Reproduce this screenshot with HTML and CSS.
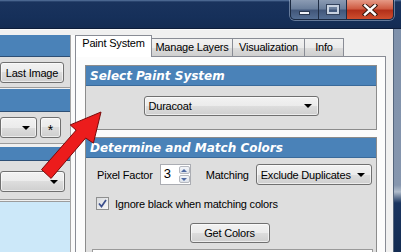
FILE: index.html
```html
<!DOCTYPE html>
<html>
<head>
<title>Paint System</title>
<link rel="stylesheet" href="styles.css">
</head>
<body>

<div class="window">
  <div class="titlebar">
    <div class="caption">
      <div class="cap-btn cap-min"><span class="min-glyph"></span></div>
      <div class="cap-btn cap-max"><span class="max-glyph"></span></div>
      <div class="cap-btn cap-close">
        <svg width="16" height="12" viewBox="0 0 16 12">
          <path d="M3 1.5 L13 10.5 M13 1.5 L3 10.5" stroke="#3a1a10" stroke-width="4.4" stroke-linecap="square"/>
          <path d="M3 1.5 L13 10.5 M13 1.5 L3 10.5" stroke="#fff" stroke-width="2.4" stroke-linecap="square"/>
        </svg>
      </div>
    </div>
  </div>

  <div class="main">
    <div class="client">

      <div class="sidebar">
        <div class="side-sec s1">
          <div class="side-head"></div>
          <div class="side-body">
            <button class="btn last-btn">Last Image</button>
          </div>
        </div>
        <div class="side-sec s2">
          <div class="side-head"></div>
          <div class="side-body">
            <div class="combo combo-short"><span class="caret"></span></div>
            <button class="btn star-btn">*</button>
          </div>
        </div>
        <div class="side-sec s3">
          <div class="side-head"></div>
          <div class="side-body">
            <div class="combo combo-wide"><span class="caret"></span></div>
          </div>
        </div>
        <div class="side-view"></div>
      </div>

      <div class="splitter"></div>

      <div class="tabctl">
        <div class="tabstrip">
          <div class="tab selected tab-paint">Paint System</div>
          <div class="tab tab-layers">Manage Layers</div>
          <div class="tab tab-vis">Visualization</div>
          <div class="tab tab-info">Info</div>
        </div>
        <div class="tabpage">

          <div class="group">
            <div class="group-head">Select Paint System</div>
            <div class="group-body paint-body">
              <div class="combo combo-paint">Duracoat<span class="caret"></span></div>
            </div>
          </div>

          <div class="group group-match">
            <div class="group-head">Determine and Match Colors</div>
            <div class="group-body match-body">
              <div class="row row-top">
                <span class="lbl">Pixel Factor</span>
                <div class="spin">
                  <span class="spin-val">3</span>
                  <div class="spin-btns">
                    <span class="spin-up"></span>
                    <span class="spin-down"></span>
                  </div>
                </div>
                <span class="lbl lbl-matching">Matching</span>
                <div class="combo combo-match">Exclude Duplicates<span class="caret"></span></div>
              </div>
              <div class="row row-check">
                <span class="checkbox">
                  <svg width="9" height="9" viewBox="0 0 9 9">
                    <path d="M1 4.5 L3.5 7.5 L8 1" fill="none" stroke="#3b4f8c" stroke-width="1.7"/>
                  </svg>
                </span>
                <span class="lbl">Ignore black when matching colors</span>
              </div>
              <div class="row row-btn">
                <button class="btn get-btn">Get Colors</button>
              </div>
              <div class="result-box"></div>
            </div>
          </div>

        </div>
      </div>

    </div>
    <div class="frame-right"></div>
  </div>

  <svg class="pointer" width="401" height="252" viewBox="0 0 401 252">
    <polygon points="51.1,178.4 41.5,169.6 76.1,130.2 70.2,124.9 101,112 93.4,143.2 85.7,138.0"
             fill="#ec1c1c" stroke="#7a0a0a" stroke-width="1" stroke-linejoin="miter"/>
  </svg>
</div>

</body>
</html>
```

FILE: styles.css
```css
* {
  box-sizing: border-box;
}

body {
  margin: 0;
  width: 401px;
  height: 252px;
  overflow: hidden;
  font-family: "Liberation Sans", Arial, sans-serif;
  font-size: 11px;
  letter-spacing: -0.2px;
  color: #000;
  background-color: #f0f0f0;
}

.window {
  position: relative;
  width: 401px;
  height: 252px;
  display: flex;
  flex-direction: column;
  overflow: hidden;
}

/* Title bar */
.titlebar {
  height: 29px;
  flex: none;
  display: flex;
  justify-content: flex-end;
  align-items: flex-start;
  padding-right: 7px;
  background: linear-gradient(#5a77a0 0, #1a335d 2px, #16305a 60%, #142c53 100%);
  border-bottom: 1px solid #0d1d3a;
}

.caption {
  display: flex;
  height: 20px;
  border: 1px solid #1b2940;
  border-top: none;
  border-radius: 0 0 5px 5px;
  overflow: hidden;
  box-shadow: 0 0 0 1px rgba(200, 215, 235, 0.45);
}

.cap-btn {
  height: 100%;
  display: flex;
  align-items: center;
  justify-content: center;
  border-left: 1px solid #1f2d44;
}

.cap-min {
  width: 27px;
  border-left: none;
  background: linear-gradient(#8b9bb3 0, #6b7f9c 45%, #42577a 55%, #556f94 100%);
}

.cap-max {
  width: 28px;
  background: linear-gradient(#8b9bb3 0, #6b7f9c 45%, #42577a 55%, #556f94 100%);
}

.cap-close {
  width: 47px;
  background: linear-gradient(#e69a86 0, #cf5c43 45%, #b3301a 55%, #cf4e2e 100%);
}

.min-glyph {
  width: 11px;
  height: 4px;
  margin-top: 6px;
  background: #eef2f8;
  border: 1px solid #2a3850;
}

.max-glyph {
  width: 12px;
  height: 9px;
  border: 2px solid #c8d2e0;
  outline: 1px solid #34435c;
}

/* Main area */
.main {
  flex: 1;
  display: flex;
  min-height: 0;
}

.client {
  width: 393px;
  display: flex;
  padding-top: 5px;
  padding-right: 7px;
  background-color: #f0f0f0;
  border-top: 1px solid #fafafa;
}

.frame-right {
  flex: 1;
  border-left: 1px solid #55657c;
  background: linear-gradient(#7f91ab 0, #8696ae 70%, #b0bccb 73%, #1a3560 78%, #132b52 100%);
}

/* Left panel */
.sidebar {
  width: 71px;
  flex: none;
  display: flex;
  flex-direction: column;
  border-right: 1px solid #a5a5a5;
}

.side-sec {
  border-bottom: 1px solid #9c9c9c;
  margin-bottom: 1px;
  background-color: #dedede;
}

.side-head {
  background-color: #4a82b8;
  border-bottom: 1px solid #2d4f75;
}

.side-body {
  display: flex;
  justify-content: flex-end;
  gap: 3px;
  padding-right: 6px;
}

.s1 .side-head {
  height: 22px;
}

.s1 .side-body {
  height: 30px;
  padding-top: 5px;
}

.s2 .side-head {
  height: 23px;
}

.s2 {
  margin-bottom: 3px;
}

.s2 .side-body {
  height: 31px;
  padding-top: 5px;
  padding-right: 9px;
}

.s3 .side-head {
  height: 14px;
}

.s3 .side-body {
  height: 38px;
  padding-top: 10px;
  padding-right: 5px;
}

.side-view {
  flex: 1;
  background-color: #cce8f9;
  border-top: 1px solid #9c9c9c;
}

.splitter {
  width: 4px;
  flex: none;
  background-color: #fbfbfb;
}

/* Buttons and combo boxes */
.btn {
  font-family: inherit;
  font-size: 11px;
  letter-spacing: -0.2px;
  height: 21px;
  padding: 0;
  border: 1px solid #707070;
  border-radius: 3px;
  background: linear-gradient(#f2f2f2 0, #ebebeb 50%, #dddddd 50%, #cfcfcf 100%);
  box-shadow: inset 0 0 0 1px rgba(255, 255, 255, 0.6);
  color: #000;
}

.last-btn {
  width: 72px;
}

.star-btn {
  width: 23px;
  font-size: 14px;
  line-height: 14px;
  padding-top: 4px;
}

.get-btn {
  width: 80px;
  height: 20px;
}

.combo {
  height: 21px;
  display: flex;
  align-items: center;
  padding-left: 4px;
  border: 1px solid #707070;
  border-radius: 3px;
  background: linear-gradient(#f2f2f2 0, #ebebeb 50%, #dddddd 50%, #cfcfcf 100%);
  box-shadow: inset 0 0 0 1px rgba(255, 255, 255, 0.6);
  white-space: nowrap;
}

.caret {
  margin-left: auto;
  margin-right: 6px;
  width: 0;
  height: 0;
  border-left: 4px solid transparent;
  border-right: 4px solid transparent;
  border-top: 4px solid #000;
}

.combo-short {
  width: 40px;
}

.combo-wide {
  width: 70px;
}

/* Tab control */
.tabctl {
  width: 311px;
  flex: none;
  display: flex;
  flex-direction: column;
}

.tabstrip {
  height: 21px;
  display: flex;
  align-items: flex-end;
  position: relative;
  z-index: 1;
}

.tab {
  height: 18px;
  margin-left: -1px;
  border: 1px solid #898c95;
  border-bottom: none;
  background: linear-gradient(#f2f2f2 0, #ebebeb 50%, #dddddd 50%, #cfcfcf 100%);
  text-align: center;
  line-height: 17px;
  white-space: nowrap;
}

.tab.selected {
  height: 22px;
  margin-left: 0;
  margin-bottom: -1px;
  background: #fff;
  line-height: 15px;
  position: relative;
  z-index: 1;
}

.tab-paint {
  width: 77px;
}

.tab-layers {
  width: 82px;
}

.tab-vis {
  width: 73px;
}

.tab-info {
  width: 40px;
}

.tabpage {
  flex: 1;
  min-height: 0;
  overflow: hidden;
  border: 1px solid #898c95;
  border-bottom: none;
  background-color: #fcfcfc;
  padding: 8px 8px 0 9px;
}

/* Groups */
.group {
  border: 1px solid #8c8c8c;
  background-color: #dedede;
}

.group-match {
  margin-top: 7px;
}

.group-head {
  height: 20px;
  padding-left: 4px;
  background-color: #4a82b8;
  color: #fff;
  font-family: "DejaVu Sans", Verdana, sans-serif;
  font-size: 12px;
  font-weight: bold;
  font-style: italic;
  letter-spacing: 0;
  line-height: 20px;
  border-bottom: 1px solid #3a6a9a;
}

.paint-body {
  height: 43px;
  display: flex;
  justify-content: center;
  padding-top: 10px;
}

.combo-paint {
  width: 175px;
  height: 20px;
}

.match-body {
  padding: 6px 0 0 11px;
}

.row {
  display: flex;
  align-items: center;
}

.row-top {
  height: 21px;
}

.spin {
  width: 31px;
  height: 21px;
  margin-left: 7px;
  display: flex;
  border: 1px solid #abadb3;
  background-color: #fff;
}

.spin-val {
  flex: 1;
  padding-left: 3px;
  font-size: 13px;
  line-height: 17px;
}

.spin-btns {
  width: 11px;
  display: flex;
  flex-direction: column;
  gap: 1px;
  padding: 1px 0;
}

.spin-up,
.spin-down {
  flex: 1;
  display: flex;
  align-items: center;
  justify-content: center;
  border: 1px solid #b5b8bf;
  border-radius: 2px;
  background: linear-gradient(#f4f6f9, #dde2ea);
}

.spin-up::after,
.spin-down::after {
  content: "";
  width: 0;
  height: 0;
  border-left: 3px solid transparent;
  border-right: 3px solid transparent;
}

.spin-up::after {
  border-bottom: 3px solid #4f6aa3;
}

.spin-down::after {
  border-top: 3px solid #4f6aa3;
}

.lbl-matching {
  margin-left: 15px;
  margin-right: 7px;
}

.combo-match {
  width: 116px;
}

.row-check {
  height: 13px;
  margin-top: 12px;
}

.checkbox {
  width: 13px;
  height: 13px;
  margin-left: -1px;
  margin-right: 6px;
  display: flex;
  align-items: center;
  justify-content: center;
  border: 1px solid #8e8f8f;
  background: linear-gradient(135deg, #d8dadd, #f8f8f8);
}

.row-btn {
  justify-content: center;
  margin-top: 13px;
  padding-right: 14px;
}

.result-box {
  width: 281px;
  height: 20px;
  margin-top: 6px;
  margin-left: -5px;
  border: 1px solid #9a9a9a;
  background-color: #fff;
}

/* Red callout arrow, drawn over the window */
.pointer {
  position: absolute;
  left: 0;
  top: 0;
  pointer-events: none;
}
```
